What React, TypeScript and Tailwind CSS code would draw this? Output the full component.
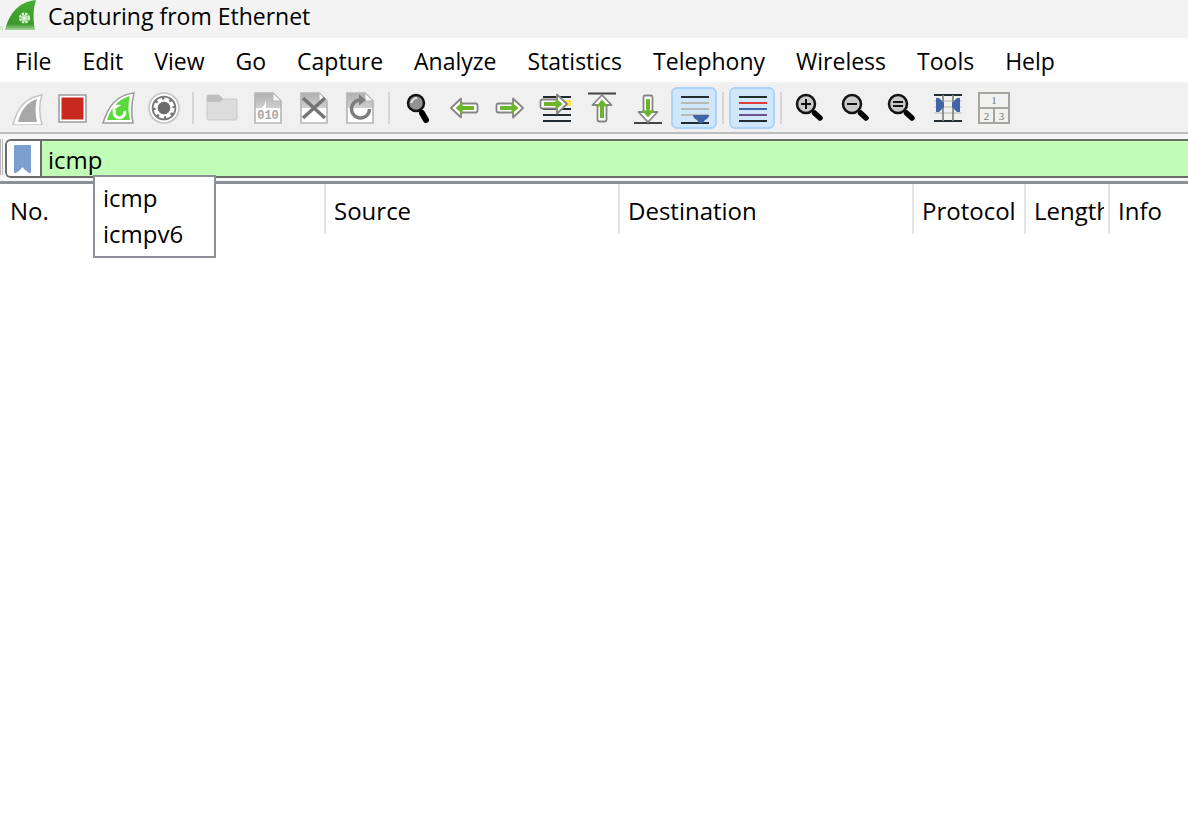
import React from "react";

const MENUS = ["File", "Edit", "View", "Go", "Capture", "Analyze", "Statistics", "Telephony", "Wireless", "Tools", "Help"];

function Icon({ children }: { children: React.ReactNode }) {
  return (
    <svg viewBox="0 0 34 34" className="h-[34px] w-[34px]" aria-hidden="true">
      {children}
    </svg>
  );
}

function ToolButton({ label, active, children }: { label: string; active?: boolean; children: React.ReactNode }) {
  return (
    <button
      type="button"
      aria-label={label}
      className={
        active
          ? "flex h-[42px] w-[46px] shrink-0 items-center justify-center rounded-md border-2 border-[#a9d3f8] bg-[#cfe6fb]"
          : "flex h-[42px] w-[46px] shrink-0 items-center justify-center"
      }
    >
      <Icon>{children}</Icon>
    </button>
  );
}

function Separator() {
  return (
    <div className="flex w-3 shrink-0 justify-center">
      <div className="h-8 w-0.5 bg-[#d6d6d6]" />
    </div>
  );
}

function Lens({ children }: { children?: React.ReactNode }) {
  return (
    <>
      <path d="M21.500 22l5.500 5" stroke="#000" strokeWidth="5.500" strokeLinecap="round" />
      <circle cx="13" cy="13" r="9" fill="#c9c9c9" stroke="#111" strokeWidth="2.500" />
      {children}
    </>
  );
}

function Doc({ children }: { children: React.ReactNode }) {
  return (
    <>
      <path d="M4 2h18l8 8v22H4z" fill="#fff" />
      <path d="M4 2h18l8 8v7H4z" fill="url(#page-shade)" />
      <path d="M4 2h18l8 8v22H4z" fill="none" stroke="#b5b5b5" strokeWidth="1.600" />
      <path d="M22 2v8h8z" fill="#f8f8f8" stroke="#b5b5b5" />
      {children}
    </>
  );
}

const ARROW = "M3 17L13 7.500v5h14.500q2 0 2 2v5q0 2-2 2H13v5z";
const ARROW_IN = "M7.500 17l7-6v4H26v4H14.500v4z";

function Arrow({ transform }: { transform?: string }) {
  return (
    <g transform={transform}>
      <path d={ARROW} fill="#fff" stroke="#858585" strokeWidth="1.800" strokeLinejoin="round" />
      <path d={ARROW_IN} fill="#6bb52a" />
    </g>
  );
}

export default function App() {
  return (
    <div className="min-h-screen w-full overflow-hidden bg-white font-['Open_Sans','Noto_Sans',sans-serif] text-black">
      <header className="flex h-[38px] items-start bg-[#f3f3f3]">
        <svg viewBox="0 0 40 32" className="h-8 w-10 shrink-0" aria-hidden="true">
          <defs>
            <linearGradient id="fin" x1="0" y1="0" x2="0" y2="1">
              <stop offset="0" stopColor="#46ad33" />
              <stop offset=".8" stopColor="#3c9a2a" />
              <stop offset="1" stopColor="#a6d69c" />
            </linearGradient>
            <linearGradient id="page-shade" x1="0" y1="0" x2="0" y2="1">
              <stop offset="0" stopColor="#b0b0b0" />
              <stop offset="1" stopColor="#cfcfcf" />
            </linearGradient>
          </defs>
          <path d="M0 26v4M2.500 27v3" stroke="#b9e5ac" />
          <path d="M5 30C9 15 17 2 36 0c-3 9-3 20-1 30z" fill="url(#fin)" />
          <circle cx="24.500" cy="18" r="4.300" fill="none" stroke="#d9f2d4" strokeWidth="2.600" strokeDasharray="2.400 1" />
          <circle cx="24.500" cy="18" r="3.300" fill="#b9e0b2" />
          <circle cx="24.500" cy="18" r="1.600" fill="#eefaec" />
        </svg>
        <h1 className="pl-2 text-[23px] leading-8 whitespace-nowrap">Capturing from Ethernet</h1>
      </header>

      <nav aria-label="Main menu" className="flex h-[46px] items-center gap-px border-b-2 border-[#f3f3f3] bg-white pt-px">
        {MENUS.map((m) => (
          <button key={m} type="button" className="shrink-0 px-[15px] text-[23px] leading-8">
            {m}
          </button>
        ))}
      </nav>

      <div role="toolbar" aria-label="Main toolbar" className="flex h-[50px] items-center border-b-2 border-[#bdbdbd] bg-[#f0f0f0] pl-[3px]">
        <ToolButton label="Start capture">
          <path d="M4 34C8 18 15 7 33 4c-3 8-3 20 0 30z" fill="#fff" stroke="#c4c4c4" strokeWidth="1.500" />
          <path d="M9 31C12 19 18 11 28 8c-2 7-2 15 0 23z" fill="#a8a8a8" />
        </ToolButton>
        <ToolButton label="Stop capture">
          <path d="M4 4h27v27H4z" fill="#fff" stroke="#9b9b9b" strokeWidth="1.500" />
          <path d="M6.500 6.500h22v22h-22z" fill="#c92a20" />
        </ToolButton>
        <ToolButton label="Restart capture">
          <path d="M2 32C7 16 15 4 33 2c-2 8-3 20-1 30z" fill="#fff" stroke="#9b9b9b" strokeWidth="1.500" />
          <path d="M6 29C10 17 17 8 29 5c-2 7-2 16 0 24z" fill="#5bd83c" />
          <path d="M23.500 20a5.300 5.300 0 1 1-9.500-1.500" fill="none" stroke="#fff" strokeWidth="3" />
          <path d="M11 20l2.500-6.500 7 .5z" fill="#fff" />
        </ToolButton>
        <ToolButton label="Capture options">
          <circle cx="17" cy="17" r="15" fill="#fff" stroke="#c2c2c2" strokeWidth="1.500" />
          <circle cx="17" cy="17" r="12.300" fill="#777" />
          <circle cx="17" cy="17" r="8.500" fill="none" stroke="#fff" strokeWidth="4" strokeDasharray="4.500 2.200" />
          <circle cx="17" cy="17" r="7.500" fill="none" stroke="#fff" strokeWidth="2" />
          <circle cx="17" cy="17" r="5.800" fill="#6b6b6b" />
        </ToolButton>
        <Separator />
        <ToolButton label="Open">
          <path d="M2 6q0-2 2-2h10l4 4h13q1 0 1 2v17q0 2-2 2H4q-2 0-2-2z" fill="#dcdcdc" stroke="#c8c8c8" />
          <path d="M2 6q0-2 2-2h10l4 4-3 3H2z" fill="#bebebe" />
        </ToolButton>
        <ToolButton label="Save">
          <Doc>
            <path d="M15 9v9h-6q5-3 6-9z" fill="#fff" />
            <text x="17" y="28" textAnchor="middle" fontSize="12" fontWeight="700" fontFamily="Liberation Mono, monospace" fill="#a5a5a5">010</text>
          </Doc>
        </ToolButton>
        <ToolButton label="Close">
          <Doc>
            <path d="M6 7l22 20M28 7L6 27" stroke="#757575" strokeWidth="3.500" />
          </Doc>
        </ToolButton>
        <ToolButton label="Reload">
          <Doc>
            <path d="M26.500 18a9 9 0 1 1-9-9" fill="none" stroke="#7d7d7d" strokeWidth="3.500" />
            <path d="M16 3.500l7 5.500-7 5.500z" fill="#7d7d7d" />
          </Doc>
        </ToolButton>
        <Separator />
        <ToolButton label="Find">
          <path d="M21 22l4 7" stroke="#000" strokeWidth="6" strokeLinecap="round" />
          <path d="M18 18l4 5" stroke="#000" strokeWidth="3" />
          <circle cx="15" cy="12" r="8" fill="#929292" stroke="#111" strokeWidth="2.500" />
          <path d="M10 12q2-5 6-5" fill="none" stroke="#e3e3e3" strokeWidth="2" />
        </ToolButton>
        <ToolButton label="Previous packet"><Arrow transform="translate(1 0)" /></ToolButton>
        <ToolButton label="Next packet"><Arrow transform="translate(33 0) scale(-1 1)" /></ToolButton>
        <ToolButton label="Go to packet">
          <path d="M21 9h11v6H21z" fill="#ffe24a" />
          <path d="M4 6h28M4 18h28M4 24h28M4 30h28" stroke="#222b30" strokeWidth="2.200" />
          <Arrow transform="translate(31 -4) scale(-1 1)" />
        </ToolButton>
        <ToolButton label="First packet">
          <path d="M3 2.500h28" stroke="#444" strokeWidth="2" />
          <Arrow transform="translate(34 1) rotate(90)" />
        </ToolButton>
        <ToolButton label="Last packet">
          <path d="M3 32h28" stroke="#444" strokeWidth="2" />
          <Arrow transform="translate(0 34) rotate(-90)" />
        </ToolButton>
        <ToolButton label="Auto scroll" active>
          <path d="M4 6h28M4 32h28" stroke="#222b30" strokeWidth="2" />
          <path d="M4 12h28M4 18h28M4 24h28" stroke="#b8bcb4" strokeWidth="2" />
          <path d="M16 24h16q0 3-4 5l-2 3h-4l-2-3q-4-2-4-5z" fill="#3f64a8" />
        </ToolButton>
        <Separator />
        <ToolButton label="Colorize" active>
          <path d="M4 6h28M4 30h28" stroke="#222b30" strokeWidth="2" />
          <path d="M4 12h28" stroke="#e23a3a" strokeWidth="2" />
          <path d="M4 18h28" stroke="#3f64a8" strokeWidth="2" />
          <path d="M4 24h28" stroke="#74508a" strokeWidth="2" />
        </ToolButton>
        <Separator />
        <ToolButton label="Zoom in"><Lens><path d="M8 13h10M13 8v10" stroke="#111" strokeWidth="2" /></Lens></ToolButton>
        <ToolButton label="Zoom out"><Lens><path d="M8 13h10" stroke="#111" strokeWidth="2" /></Lens></ToolButton>
        <ToolButton label="Normal size"><Lens><path d="M8 11h10M8 15h10" stroke="#111" strokeWidth="2" /></Lens></ToolButton>
        <ToolButton label="Resize columns">
          <path d="M3 10h28M3 16h28M3 22h28" stroke="#c8cac4" strokeWidth="1.500" />
          <path d="M3 4h28M3 30h28" stroke="#222b30" strokeWidth="2.200" />
          <path d="M12 4v26M22 4v26" stroke="#858a85" strokeWidth="1.800" />
          <path d="M5 7l3 0 5 5v4l-5 5H5zM29 7h-3l-5 5v4l5 5h3z" fill="#3f64a8" />
        </ToolButton>
        <ToolButton label="Layout">
          <path d="M2 2h30v30H2zM2 17h30M17 17v15" fill="#f1f1ef" stroke="#a3a5a0" strokeWidth="2" />
          <g fontFamily="Liberation Serif, serif" fontSize="11" fill="#777" textAnchor="middle">
            <text x="17" y="13">1</text><text x="9.500" y="28.500">2</text><text x="24.500" y="28.500">3</text>
          </g>
        </ToolButton>
      </div>

      <div className="relative flex h-[50px] items-start border-b-[3px] border-[#8d9098] bg-[#f6f6f6] pt-[5px]">
        <div className="mr-0.5 h-9 w-[3px] shrink-0 border-x border-[#b5b5b5]" />
        <div className="flex h-[39px] min-w-0 flex-1 overflow-hidden rounded-l-md border-2 border-r-0 border-[#6b6b6b] bg-[#c1fdb6]">
          <button type="button" aria-label="Filter bookmarks" className="flex w-[35px] shrink-0 items-center border-r-2 border-[#6b6b6b] bg-white pl-[7px]">
            <svg viewBox="0 0 17 28" className="h-7 w-[17px]" aria-hidden="true">
              <path d="M0 1q0-1 1-1h15q1 0 1 1v27h-2l-4-3-2.500-3L6 25l-4 3H0z" fill="#7c9fd0" />
            </svg>
          </button>
          <input aria-label="Display filter" defaultValue="icmp" spellCheck={false} className="min-w-0 flex-1 bg-transparent pt-0.5 pl-1.5 text-2xl leading-8 outline-none" />
        </div>
        <ul role="listbox" aria-label="Filter suggestions" className="absolute top-[41px] left-[93px] z-10 h-[83px] w-[123px] border-2 border-[#8d9098] bg-white px-2 py-[3px] text-2xl leading-9">
          <li role="option" aria-selected="false">icmp</li>
          <li role="option" aria-selected="false">icmpv6</li>
        </ul>
      </div>

      <table className="w-full table-fixed border-separate border-spacing-0 text-left">
        <thead>
          <tr className="h-[50px] text-2xl">
            <th className="w-[326px] border-r-2 border-[#e5e5e5] p-0 pt-1 pl-2.5 font-normal">No.</th>
            <th className="w-[294px] border-r-2 border-[#e5e5e5] p-0 pt-1 pl-2 font-normal">Source</th>
            <th className="w-[294px] border-r-2 border-[#e5e5e5] p-0 pt-1 pl-2 font-normal">Destination</th>
            <th className="w-[112px] border-r-2 border-[#e5e5e5] p-0 pt-1 pl-2 font-normal">Protocol</th>
            <th className="w-[84px] border-r-2 border-[#e5e5e5] p-0 pt-1 pr-1 pl-2 font-normal"><div className="overflow-hidden">Length</div></th>
            <th className="p-0 pt-1 pl-2 font-normal">Info</th>
          </tr>
        </thead>
      </table>
    </div>
  );
}
